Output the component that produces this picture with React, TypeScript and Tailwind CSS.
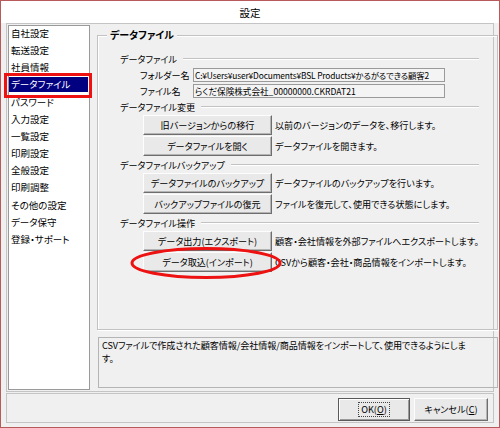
import React from "react";

const items = [
  "自社設定",
  "転送設定",
  "社員情報",
  "データファイル",
  "パスワード",
  "入力設定",
  "一覧設定",
  "印刷設定",
  "全般設定",
  "印刷調整",
  "その他の設定",
  "データ保守",
  "登録・サポート",
];

function SectionTitle({ text }: { text: string }) {
  return (
    <div className="flex items-center h-[14px]">
      <span className="whitespace-nowrap">{text}</span>
      <div className="flex-1 ml-[6px] border-t border-b border-t-[#c2c2c2] border-b-white" />
    </div>
  );
}

function Btn({ label }: { label: string }) {
  return (
    <div className="w-[129px] h-[20px] flex items-center justify-center whitespace-nowrap bg-[#e9e9e9] border border-t-[#fdfdfd] border-l-[#fdfdfd] border-r-[#6e6e6e] border-b-[#6e6e6e] shadow-[inset_-1px_-1px_0_#b4b4b4]">
      {label}
    </div>
  );
}

function BtnRow({ label, desc, mt }: { label: string; desc: string; mt: string }) {
  return (
    <div className={`flex items-center pl-[23px] ${mt}`}>
      <Btn label={label} />
      <span className="ml-[3px] whitespace-nowrap">{desc}</span>
    </div>
  );
}

export default function App() {
  return (
    <div className="relative w-[500px] h-[428px] border border-[#b95a5a] bg-[#f0f0f0] flex flex-col text-[9.1px] leading-[13px] text-black overflow-hidden font-['Noto_Sans_CJK_JP','Noto_Sans',sans-serif] [font-feature-settings:'palt']">
      {/* title bar */}
      <div className="h-[22px] bg-white flex items-center justify-center text-[10.5px] shrink-0">
        設定
      </div>

      {/* main panel */}
      <div className="mx-[5px] h-[369px] border border-[#c4c4c4] flex shrink-0">
        {/* list */}
        <div className="ml-[1px] mt-[1px] w-[82px] h-[365px] border border-[#9a9a9a] bg-white flex flex-col gap-[2.17px] shrink-0 text-[9.5px]">
          {items.map((it, i) => (
            <div
              key={it}
              className={
                i === 3
                  ? "h-[15px] mr-[1px] pl-[2px] flex items-center whitespace-nowrap bg-[#000080] text-white"
                  : "h-[15px] pl-[2px] flex items-center whitespace-nowrap"
              }
            >
              {it}
            </div>
          ))}
        </div>

        {/* right column */}
        <div className="flex-1 flex flex-col pl-[7px] pr-[10px] pt-[11px]">
          <div className="relative h-[295px] border border-[#c2c2c2] shadow-[inset_1px_1px_0_#fff,1px_1px_0_#fff] pt-[16px] pl-[22px] pr-[18px]">
            <div className="absolute left-[9px] top-[-8px] px-[3px] bg-[#f0f0f0] font-bold text-[10px] leading-[14px]">
              データファイル
            </div>

            <SectionTitle text="データファイル" />
            <div className="flex items-center pl-[20px] mt-[2px]">
              <span className="w-[53px] whitespace-nowrap">フォルダー名</span>
              <div className="w-[252px] h-[14px] border border-[#9a9a9a] bg-[#f4f4f4] px-[1px] leading-[12px] whitespace-nowrap overflow-hidden text-[8.4px] tracking-[-0.15px]">
                C:¥Users¥user¥Documents¥BSL Products¥かるがるできる顧客2
              </div>
            </div>
            <div className="flex items-center pl-[20px] mt-[2px]">
              <span className="w-[53px] whitespace-nowrap">ファイル名</span>
              <div className="w-[252px] h-[14px] border border-[#9a9a9a] bg-[#f4f4f4] px-[1px] leading-[12px] whitespace-nowrap overflow-hidden text-[8.6px]">
                らくだ保険株式会社_00000000.CKRDAT21
              </div>
            </div>

            <div className="mt-[2px]">
              <SectionTitle text="データファイル変更" />
            </div>
            <BtnRow mt="mt-[1px]" label="旧バージョンからの移行" desc="以前のバージョンのデータを、移行します。" />
            <BtnRow mt="mt-[1px]" label="データファイルを開く" desc="データファイルを開きます。" />

            <div className="mt-[2px]">
              <SectionTitle text="データファイルバックアップ" />
            </div>
            <BtnRow mt="mt-[1px]" label="データファイルのバックアップ" desc="データファイルのバックアップを行います。" />
            <BtnRow mt="mt-[1px]" label="バックアップファイルの復元" desc="ファイルを復元して、使用できる状態にします。" />

            <div className="mt-[2px]">
              <SectionTitle text="データファイル操作" />
            </div>
            <BtnRow mt="mt-[1px]" label="データ出力(エクスポート)" desc="顧客・会社情報を外部ファイルへエクスポートします。" />
            <BtnRow mt="mt-[1px]" label="データ取込(インポート)" desc="CSVから顧客・会社・商品情報をインポートします。" />
          </div>

          <div className="mt-[7px] ml-[1px] h-[51px] border border-[#b4b4b4] px-[3px] pt-[1px] shrink-0">
            <div className="whitespace-nowrap tracking-[-0.1px]">
              CSVファイルで作成された顧客情報/会社情報/商品情報をインポートして、使用できるようにしま
            </div>
            <div>す。</div>
          </div>
        </div>
      </div>

      {/* footer */}
      <div className="mx-[5px] mt-[1px] h-[30px] border border-[#c4c4c4] flex justify-end items-start pt-[4px] pr-[5px] gap-[4px] shrink-0">
        <div className="w-[72px] h-[23px] flex items-center justify-center bg-[#e9e9e9] border border-[#5a5a5a] shadow-[inset_1px_1px_0_#fff,inset_-1px_-1px_0_#9a9a9a]">
          <div className="px-[2px] border border-dotted border-[#444]">
            OK(<span className="underline">O</span>)
          </div>
        </div>
        <div className="w-[74px] h-[23px] flex items-center justify-center bg-[#e9e9e9] border border-t-[#fdfdfd] border-l-[#fdfdfd] border-r-[#6e6e6e] border-b-[#6e6e6e] shadow-[inset_-1px_-1px_0_#b4b4b4]">
          キャンセル(<span className="underline">C</span>)
        </div>
      </div>

      {/* annotation overlays */}
      <div className="absolute left-[3px] top-[72px] w-[88px] h-[25px] border-[3px] border-[#ee1111] pointer-events-none" />
      <svg className="absolute left-[128px] top-[245px] pointer-events-none" width="156" height="34" viewBox="0 0 156 34">
        <ellipse cx="77" cy="17" rx="74" ry="14.5" fill="none" stroke="#ee1111" strokeWidth="3" />
      </svg>
    </div>
  );
}
